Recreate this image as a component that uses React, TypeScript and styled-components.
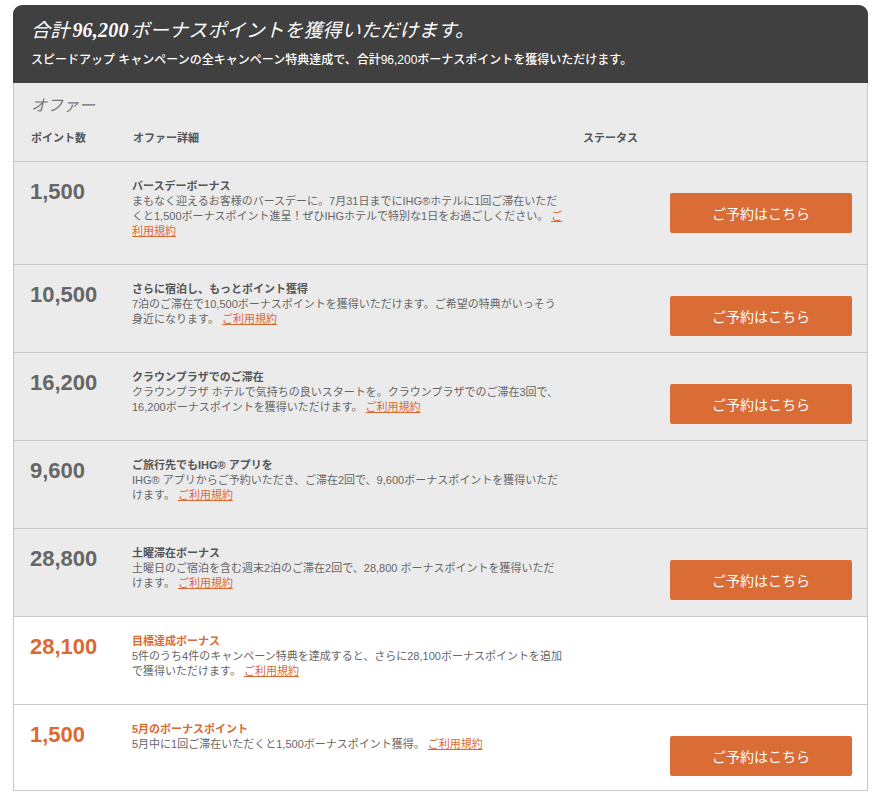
import React from "react";
import styled, { createGlobalStyle } from "styled-components";

const Global = createGlobalStyle`
  html, body { margin: 0; padding: 0; background: #ffffff; }
  body { font-family: "Liberation Sans", "Noto Sans CJK JP", sans-serif; }
`;

const Panel = styled.div`
  width: 855px;
  margin: 5px 0 0 13px;
  box-sizing: border-box;
`;

const Header = styled.div`
  background: #404040;
  border-radius: 9px 9px 0 0;
  padding: 12px 18px 14px;
  color: #ffffff;
`;

const Title = styled.h1`
  margin: 0;
  font-family: "Liberation Serif", "Noto Sans CJK JP", serif;
  font-style: italic;
  font-weight: normal;
  font-size: 19px;
  line-height: 26px;
  letter-spacing: 0.2px;
`;

const TitleNum = styled.span`
  font-weight: bold;
  font-size: 20px;
  margin: 0 2px 0 3px;
`;

const Subtitle = styled.p`
  margin: 7px 0 0;
  font-size: 12px;
  line-height: 18px;
  font-weight: 500;
`;

const Body = styled.div`
  border-left: 1px solid #c8c8c8;
  border-right: 1px solid #c8c8c8;
  border-bottom: 1px solid #c8c8c8;
`;

const OfferHead = styled.div`
  background: #ebebeb;
  padding: 13px 0 0 17px;
  border-bottom: 1px solid #c8c8c8;
`;

const OfferLabel = styled.div`
  font-family: "Liberation Serif", "Noto Sans CJK JP", serif;
  font-style: italic;
  font-size: 16px;
  line-height: 20px;
  color: #777;
`;

const Grid = styled.div`
  display: grid;
  grid-template-columns: 102px 450px 1fr;
`;

const ColHeads = styled(Grid)`
  padding: 15px 0 15px;
`;

const ColHead = styled.div`
  font-size: 11px;
  font-weight: bold;
  color: #555;
  line-height: 15px;
`;

const Row = styled(Grid)<{ $white?: boolean }>`
  background: ${(p) => (p.$white ? "#ffffff" : "#ebebeb")};
  padding: 17px 15px 14px 16px;
  & + & { border-top: 1px solid #c8c8c8; }
`;

const Points = styled.div<{ $accent?: boolean }>`
  font-size: 22px;
  font-weight: bold;
  line-height: 28px;
  margin-top: -1px;
  color: ${(p) => (p.$accent ? "#dc6a30" : "#666666")};
`;

const Details = styled.div`
  padding: 0 17px 11px 0;
  font-size: 11px;
  line-height: 15px;
  color: #666;
`;

const OfferTitle = styled.div<{ $accent?: boolean }>`
  font-weight: bold;
  color: ${(p) => (p.$accent ? "#dc6a30" : "#555")};
`;

const Terms = styled.a`
  color: #dc6a30;
  text-decoration: underline;
  margin-left: 3px;
`;

const Status = styled.div`
  display: flex;
  justify-content: flex-end;
  align-items: flex-start;
`;

const BookButton = styled.button`
  margin-top: 14px;
  width: 182px;
  height: 40px;
  border: none;
  border-radius: 2px;
  background: #da6c36;
  color: #fff;
  font-family: "Liberation Sans", "Noto Sans CJK JP", sans-serif;
  font-size: 14px;
  cursor: pointer;
`;

type Offer = {
  points: string;
  title: string;
  desc: string;
  button: boolean;
  accent?: boolean;
  white?: boolean;
};

const offers: Offer[] = [
  {
    points: "1,500",
    title: "バースデーボーナス",
    desc: "まもなく迎えるお客様のバースデーに。7月31日までにIHG®ホテルに1回ご滞在いただくと1,500ボーナスポイント進呈！ぜひIHGホテルで特別な1日をお過ごしください。",
    button: true,
  },
  {
    points: "10,500",
    title: "さらに宿泊し、もっとポイント獲得",
    desc: "7泊のご滞在で10,500ボーナスポイントを獲得いただけます。ご希望の特典がいっそう身近になります。",
    button: true,
  },
  {
    points: "16,200",
    title: "クラウンプラザでのご滞在",
    desc: "クラウンプラザ ホテルで気持ちの良いスタートを。クラウンプラザでのご滞在3回で、16,200ボーナスポイントを獲得いただけます。",
    button: true,
  },
  {
    points: "9,600",
    title: "ご旅行先でもIHG® アプリを",
    desc: "IHG® アプリからご予約いただき、ご滞在2回で、9,600ボーナスポイントを獲得いただけます。",
    button: false,
  },
  {
    points: "28,800",
    title: "土曜滞在ボーナス",
    desc: "土曜日のご宿泊を含む週末2泊のご滞在2回で、28,800 ボーナスポイントを獲得いただけます。",
    button: true,
  },
  {
    points: "28,100",
    title: "目標達成ボーナス",
    desc: "5件のうち4件のキャンペーン特典を達成すると、さらに28,100ボーナスポイントを追加で獲得いただけます。",
    button: false,
    accent: true,
    white: true,
  },
  {
    points: "1,500",
    title: "5月のボーナスポイント",
    desc: "5月中に1回ご滞在いただくと1,500ボーナスポイント獲得。",
    button: true,
    accent: true,
    white: true,
  },
];

export default function App() {
  return (
    <>
      <Global />
      <Panel>
        <Header>
          <Title>
            合計<TitleNum>96,200</TitleNum>ボーナスポイントを獲得いただけます。
          </Title>
          <Subtitle>
            スピードアップ キャンペーンの全キャンペーン特典達成で、合計96,200ボーナスポイントを獲得いただけます。
          </Subtitle>
        </Header>
        <Body>
          <OfferHead>
            <OfferLabel>オファー</OfferLabel>
            <ColHeads>
              <ColHead>ポイント数</ColHead>
              <ColHead>オファー詳細</ColHead>
              <ColHead>ステータス</ColHead>
            </ColHeads>
          </OfferHead>
          {offers.map((o, i) => (
            <Row key={i} $white={o.white}>
              <Points $accent={o.accent}>{o.points}</Points>
              <Details>
                <OfferTitle $accent={o.accent}>{o.title}</OfferTitle>
                {o.desc}
                <Terms href="#">ご利用規約</Terms>
              </Details>
              <Status>{o.button && <BookButton>ご予約はこちら</BookButton>}</Status>
            </Row>
          ))}
        </Body>
      </Panel>
    </>
  );
}
